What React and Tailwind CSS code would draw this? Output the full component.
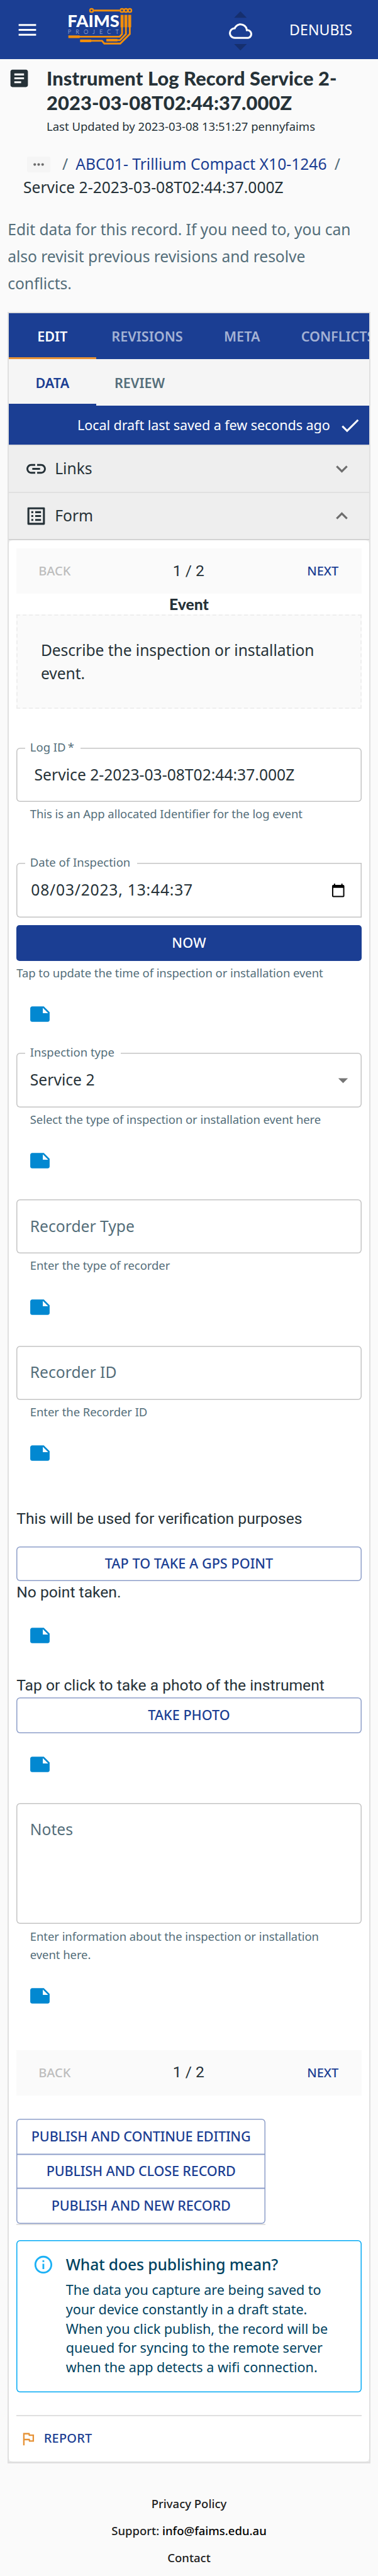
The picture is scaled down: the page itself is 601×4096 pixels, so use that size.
import React from 'react';
import {
  MdMenu,
  MdCloudQueue,
  MdMoreHoriz,
  MdExpandMore,
  MdExpandLess,
  MdArrowDropDown,
} from 'react-icons/md';

const Icon = ({ d, className }) => (
  <svg viewBox="0 0 24 24" fill="currentColor" className={className}>
    <path d={d} />
  </svg>
);

const ARTICLE =
  'M19 3H5c-1.1 0-2 .9-2 2v14c0 1.1.9 2 2 2h14c1.1 0 2-.9 2-2V5c0-1.1-.9-2-2-2zm-5 14H7v-2h7v2zm3-4H7v-2h10v2zm0-4H7V7h10v2z';
const CHECK = 'M9 16.2 4.8 12l-1.4 1.4L9 19 21 7l-1.4-1.4L9 16.2z';
const LINK =
  'M3.9 12c0-1.71 1.39-3.1 3.1-3.1h4V7H7c-2.76 0-5 2.24-5 5s2.24 5 5 5h4v-1.9H7c-1.71 0-3.1-1.39-3.1-3.1zM8 13h8v-2H8v2zm9-6h-4v1.9h4c1.71 0 3.1 1.39 3.1 3.1s-1.39 3.1-3.1 3.1h-4V17h4c2.76 0 5-2.24 5-5s-2.24-5-5-5z';
const LIST_ALT =
  'M19 5v14H5V5h14m1.1-2H3.9c-.5 0-.9.4-.9.9v16.2c0 .4.4.9.9.9h16.2c.4 0 .9-.5.9-.9V3.9c0-.5-.5-.9-.9-.9zM11 7h6v2h-6V7zm0 4h6v2h-6v-2zm0 4h6v2h-6v-2zM7 7h2v2H7V7zm0 4h2v2H7v-2zm0 4h2v2H7v-2z';
const NOTE =
  'M22 10l-6-6H4c-1.1 0-2 .9-2 2v12.01c0 1.1.9 1.99 2 1.99l16-.01c1.1 0 2-.89 2-1.99v-8zm-7-4.5l5.5 5.5H15V5.5z';
const CALENDAR =
  'M20 3h-1V1h-2v2H7V1H5v2H4c-1.1 0-2 .9-2 2v16c0 1.1.9 2 2 2h16c1.1 0 2-.9 2-2V5c0-1.1-.9-2-2-2zm0 18H4V8h16v13z';
const INFO =
  'M11 7h2v2h-2zm0 4h2v6h-2zm1-9C6.48 2 2 6.48 2 12s4.48 10 10 10 10-4.48 10-10S17.52 2 12 2zm0 18c-4.41 0-8-3.59-8-8s3.59-8 8-8 8 3.59 8 8-3.59 8-8 8z';
const FLAG = 'M12.36 6l.4 2H18v6h-3.36l-.4-2H7V6h5.36M14 4H5v17h2v-7h5.6l.4 2h7V6h-5.6L14 4z';

function Logo() {
  return (
    <svg viewBox="208 21 204 120" className="h-[61.6px] w-[104.8px]">
      <g fill="none" stroke="#f28e0b" strokeWidth="5.5">
        <circle cx="283.2" cy="32" r="5.2" strokeWidth="4.6" />
        <circle cx="377.5" cy="32" r="5.2" strokeWidth="4.6" />
        <circle cx="389.5" cy="32" r="5.2" strokeWidth="4.6" />
        <circle cx="401.5" cy="32" r="5.2" strokeWidth="4.6" />
        <path d="M290 32.2H371" />
        <path d="M377.5 83V105L370 113.3H245" />
        <path d="M389.5 83V105L371 124H362" />
        <path d="M401.5 83V105L372 134.5H322.500L315.500 126H281" />
      </g>
      <g fill="#f28e0b">
        <rect x="373" y="45.500" width="9.200" height="38.500" />
        <rect x="384.800" y="45.500" width="9.200" height="38.500" />
        <rect x="396.600" y="45.500" width="9.200" height="38.500" />
        <rect x="211.200" y="109.300" width="35" height="8.200" />
        <rect x="247.500" y="122" width="34.500" height="8.200" />
        <rect x="328.800" y="120" width="34.500" height="8" />
      </g>
      <text
        x="208.500"
        y="83.500"
        textLength="161"
        lengthAdjust="spacingAndGlyphs"
        className="fill-white font-['Lato',sans-serif] text-[52px] font-black"
      >
        FAIMS
      </text>
      <text
        x="209.500"
        y="104"
        textLength="158"
        lengthAdjust="spacing"
        className="fill-[#c3cde4] font-['Lato',sans-serif] text-[18px] font-light"
      >
        PROJECT
      </text>
    </svg>
  );
}

function Header() {
  return (
    <header className="flex h-[94px] items-center bg-[#1b3e93] text-white">
      <MdMenu className="ml-[24.7px] size-[37px]" />
      <div className="ml-[45.1px] -mt-[11px] flex h-[61.6px]">
        <Logo />
      </div>
      <div className="ml-[152px] flex w-[37px] flex-col items-center pt-[4px]">
        <svg viewBox="0 0 40 20" className="h-[10.3px] w-[20.5px]">
          <path d="M20 0L39.500 20H.5z" fill="#162f6e" />
        </svg>
        <MdCloudQueue className="my-[2px] size-[37px]" />
        <svg viewBox="0 0 40 20" className="h-[10.3px] w-[20.5px]">
          <path d="M20 20L39.500 0H.5z" fill="#162f6e" />
        </svg>
      </div>
      <div className="ml-[59.500px] text-[23.1px] leading-[36px] tracking-[0.003em]">DENUBIS</div>
    </header>
  );
}

function Breadcrumbs() {
  return (
    <nav className="mt-[29.7px] pl-[37px] text-[24.65px]">
      <div className="flex h-[36.8px] items-center">
        <button className="ml-[6.1px] flex h-[24.7px] w-[37px] items-center justify-center rounded-[3px] bg-[#f5f5f5]">
          <MdMoreHoriz className="h-[25px] w-[25px] text-[#6b6b6b]" />
        </button>
        <span className="ml-[18.8px] text-[#546e7a]">/</span>
        <span className="ml-[12.3px] whitespace-nowrap text-[#1b3e93]">ABC01- Trillium Compact X10-1246</span>
        <span className="ml-[12.3px] text-[#546e7a]">/</span>
      </div>
      <div className="h-[36.8px] leading-[36.8px]">Service 2-2023-03-08T02:44:37.000Z</div>
    </nav>
  );
}

function NoteButton({ className }) {
  return (
    <div className={`flex h-[37px] pl-[18.5px] text-[#0288d1] ${className}`}>
      <Icon d={NOTE} className="size-[37px]" />
    </div>
  );
}

function Field({ label, className, children }) {
  return (
    <div className={`relative flex h-[86.3px] items-center pl-[21.6px] text-[24.65px] shadow-[inset_0_0_0_1.5px_#c4c4c4] ${className}`}>
      {label && (
        <span className="absolute -top-[15px] left-[13.9px] bg-white pr-[10.500px] pl-[7.700px] text-[18.5px] leading-[27px] text-[#546e7a]">
          {label}
        </span>
      )}
      {children}
    </div>
  );
}

function Helper({ children }) {
  return (
    <p className="mt-[4px] h-[30px] pl-[21.6px] text-[18.5px] leading-[30px] tracking-[-0.0037em] text-[#546e7a]">{children}</p>
  );
}

function Stepper({ className }) {
  return (
    <div className={`flex h-[72.4px] items-center justify-between bg-[#fafafa] pr-[36.500px] pl-[35px] ${className}`}>
      <span className="w-[52px] text-[20px] font-medium text-[#bdbdbd]">BACK</span>
      <span className="font-['Roboto',sans-serif] text-[24.65px]">1 / 2</span>
      <span className="w-[52px] text-right text-[20px] font-medium text-[#1b3e93]">NEXT</span>
    </div>
  );
}

const outlined =
  'flex items-center justify-center text-[21.6px] font-medium text-[#1b3e93] shadow-[inset_0_0_0_1.5px_#8d9ec9]';

export default function App() {
  return (
    <div className="h-[4096px] w-[601px] overflow-hidden bg-[#fafafa] font-['Noto_Sans',sans-serif] text-[#263238]">
      <Header />
      <div className="flex pt-[12.2px]">
        <Icon d={ARTICLE} className="mt-[.1px] ml-[12.3px] size-[37px] shrink-0" />
        <div className="ml-[24.7px]">
          <h1 className="font-['Lato',sans-serif] text-[30.8px] leading-[38.5px] font-black tracking-[0.004em] whitespace-nowrap">
            Instrument Log Record Service 2-
            <br />
            2023-03-08T02:44:37.000Z
          </h1>
          <p className="mt-[4.5px] text-[18.5px] leading-[26px]">Last Updated by 2023-03-08 13:51:27 pennyfaims</p>
        </div>
      </div>
      <Breadcrumbs />
      <p className="mt-[25.6px] ml-[12.3px] text-[24.65px] leading-[43.1px] tracking-[-0.0032em] text-[#546e7a]">
        Edit data for this record. If you need to, you can
        <br />
        also revisit previous revisions and resolve
        <br />
        conflicts.
      </p>

      <main className="mt-[24.1px] ml-[12px] h-[3421.3px] w-[577px] border-x-2 border-t-2 border-b-[3px] border-[#e0e0e0] bg-[#f0f0f0]">
        <div className="flex h-[73.5px] overflow-hidden bg-[#1b3e93] text-[21.6px] font-semibold text-[#a4b2d4]">
          <div className="flex w-[138.700px] shrink-0 items-center justify-center border-b-[3px] border-[#e69235] pt-[5px] text-white">EDIT</div>
          <div className="flex w-[162.700px] shrink-0 items-center justify-center pt-[2px]">REVISIONS</div>
          <div className="flex w-[138.700px] shrink-0 items-center justify-center pt-[2px]">META</div>
          <div className="flex shrink-0 items-center pt-[2px] pl-[24.600px]">CONFLICTS</div>
        </div>
        <div className="flex h-[74px] bg-[#f5f5f5] text-[21.6px] font-semibold text-[#546e7a]">
          <div className="flex w-[138.700px] items-center justify-center border-b-[3px] border-[#1b3e93] pt-[5px] text-[#1b3e93]">DATA</div>
          <div className="flex w-[138.700px] items-center justify-center pt-[2px]">REVIEW</div>
        </div>
        <div className="flex h-[61.6px] items-center justify-end bg-[#1b3e93] pr-[12.3px] text-[21.6px] tracking-[-0.004em] text-white">
          Local draft last saved a few seconds ago
          <Icon d={CHECK} className="ml-[13px] size-[37px]" />
        </div>
        <div className="flex h-[75.4px] items-center border-t-2 border-[#e0e0e0] bg-[#eeeeee] pr-[24.7px] pl-[24.7px] text-[24.65px]">
          <Icon d={LINK} className="size-[37px]" />
          <span className="ml-[11.500px] flex-1">Links</span>
          <MdExpandMore className="size-[37px] text-[#6d6d6d]" />
        </div>
        <div className="flex h-[76.9px] items-center border-y-2 border-t-[#e0e0e0] border-b-[#d3d3d3] bg-[#eeeeee] pr-[24.7px] pl-[24.7px] text-[24.65px]">
          <Icon d={LIST_ALT} className="size-[37px]" />
          <span className="ml-[11.500px] flex-1">Form</span>
          <MdExpandLess className="size-[37px] text-[#6d6d6d]" />
        </div>

        <div className="h-[3054.8px] rounded-[6px] bg-white px-[12.2px] pt-[12.5px]">
          <Stepper />
          <h2 className="h-[32.3px] text-center font-['Lato',sans-serif] text-[24.65px] leading-[33.7px] font-black">Event</h2>
          <div className="flex h-[150.8px] items-center border-2 border-dashed border-[#eeeeee] bg-[#fafafa] pl-[36.700px] text-[24.65px] leading-[37px] tracking-[-0.003em]">
            <p>
              Describe the inspection or installation
              <br />
              event.
            </p>
          </div>

          <Field label={<>Log ID<span className="ml-[3px]">*</span></>} className="mt-[61.8px] rounded-[6px]">
            <span className="ml-[6.8px]">Service 2-2023-03-08T02:44:37.000Z</span>
          </Field>
          <Helper>This is an App allocated Identifier for the log event</Helper>

          <Field label="Date of Inspection" className="mt-[63px] rounded-l-[6px]">
            <span className="ml-[1.5px] flex-1 tracking-[0.032em]">08/03/2023, 13:44:37</span>
            <Icon d={CALENDAR} className="mr-[25.500px] size-[23.500px] text-black" />
          </Field>
          <button className="mt-[12.3px] block h-[57px] w-full rounded-[5px] bg-[#1b3e93] pb-[1px] text-[21.6px] font-medium tracking-[0.012em] text-white">
            NOW
          </button>
          <p className="mt-[4px] h-[30px] text-[18.5px] leading-[30px] tracking-[-0.0037em] text-[#546e7a]">
            Tap to update the time of inspection or installation event
          </p>
          <NoteButton className="mt-[32.3px]" />

          <Field label="Inspection type" className="mt-[43.1px] rounded-[6px]">
            <span className="flex-1">Service 2</span>
            <MdArrowDropDown className="mr-[10.800px] size-[37px] text-[#757575]" />
          </Field>
          <Helper>Select the type of inspection or installation event here</Helper>
          <NoteButton className="mt-[32.3px]" />

          <Field className="mt-[43.1px] rounded-[6px] text-[#546e7a]">Recorder Type</Field>
          <Helper>Enter the type of recorder</Helper>
          <NoteButton className="mt-[32.3px]" />

          <Field className="mt-[43.1px] rounded-[6px] text-[#546e7a]">Recorder ID</Field>
          <Helper>Enter the Recorder ID</Helper>
          <NoteButton className="mt-[32.3px]" />

          <p className="mt-[67.1px] h-[37px] font-['Roboto',sans-serif] text-[24.65px] leading-[37px]">
            This will be used for verification purposes
          </p>
          <button className={`${outlined} mt-[25.2px] h-[55.5px] w-full rounded-[6px] tracking-[0.002em]`}>
            TAP TO TAKE A GPS POINT
          </button>
          <p className="h-[36px] font-['Roboto',sans-serif] text-[24.65px] leading-[36px]">No point taken.</p>
          <NoteButton className="mt-[31.8px]" />

          <p className="mt-[41.7px] h-[37px] font-['Roboto',sans-serif] text-[24.65px] leading-[37px]">
            Tap or click to take a photo of the instrument
          </p>
          <button className={`${outlined} mt-[1.3px] h-[57px] w-full rounded-[6px]`}>TAKE PHOTO</button>
          <NoteButton className="mt-[30.9px]" />

          <div className="mt-[43.1px] h-[192.6px] rounded-[6px] pt-[23.3px] pl-[21.6px] text-[24.65px] leading-[37px] text-[#546e7a] shadow-[inset_0_0_0_1.5px_#c4c4c4]">
            Notes
          </div>
          <p className="mt-[4.3px] h-[58.6px] pl-[21.6px] text-[18.5px] leading-[29.3px] tracking-[-0.0037em] text-[#546e7a]">
            Enter information about the inspection or installation
            <br />
            event here.
          </p>
          <NoteButton className="mt-[32.6px]" />

          <Stepper className="mt-[67.8px]" />

          <div className="mt-[37px] w-[396px] border-b-2 border-[#e0e0e0] tracking-[-0.010em]">
            <button className={`${outlined} h-[57px] w-full rounded-t-[6px]`}>PUBLISH AND CONTINUE EDITING</button>
            <button className={`${outlined} -mt-[1.5px] h-[55.4px] w-full`}>PUBLISH AND CLOSE RECORD</button>
            <button className={`${outlined} -mt-[1.5px] h-[57px] w-full rounded-b-[6px]`}>PUBLISH AND NEW RECORD</button>
          </div>

          <div className="mt-[24.500px] flex h-[241.9px] rounded-[6px] pt-[19.7px] text-[#014361] shadow-[inset_0_0_0_1.5px_#03a9f4]">
            <Icon d={INFO} className="mt-[1.9px] ml-[26.2px] size-[33.9px] shrink-0 text-[#1cb1f5]" />
            <div className="ml-[18.500px]">
              <h3 className="text-[24.65px] leading-[37px] font-medium tracking-[-0.004em]">What does publishing mean?</h3>
              <p className="mt-[7.1px] text-[21.6px] leading-[30.84px] tracking-[-0.0017em] whitespace-nowrap">
                The data you capture are being saved to
                <br />
                your device constantly in a draft state.
                <br />
                When you click publish, the record will be
                <br />
                queued for syncing to the remote server
                <br />
                when the app detects a wifi connection.
              </p>
            </div>
          </div>

          <div className="mt-[36.3px] flex h-[74px] items-center border-t-2 border-[#e0e0e0] text-[20px] font-medium text-[#1b3e93]">
            <Icon d={FLAG} className="ml-[4.6px] size-[27.7px] text-[#e69235]" />
            <span className="ml-[11.300px] -mt-[3px] tracking-[0.01em]">REPORT</span>
          </div>
        </div>
      </main>

      <footer className="pt-[41.6px] text-center text-[18.5px] leading-[43.2px] font-medium text-[#212121]">
        <div>Privacy Policy</div>
        <div>
          Support: <span className="text-black">info@faims.edu.au</span>
        </div>
        <div>Contact</div>
      </footer>
    </div>
  );
}
